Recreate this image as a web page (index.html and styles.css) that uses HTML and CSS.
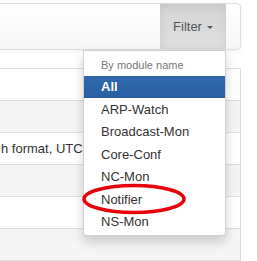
FILE: index.html
```html
<!DOCTYPE html>
<html lang="en">
<head>
  <meta charset="UTF-8" />
  <title>Events</title>
  <link rel="stylesheet" href="styles.css">
</head>
<body>

  <div class="page">
    <div class="navbar">
      <div class="filter">
        <a class="toggle" href="#">Filter <span class="caret"></span></a>
        <ul class="menu">
          <li class="header">By module name</li>
          <li class="active"><a href="#">All</a></li>
          <li><a href="#">ARP-Watch</a></li>
          <li><a href="#">Broadcast-Mon</a></li>
          <li><a href="#">Core-Conf</a></li>
          <li><a href="#">NC-Mon</a></li>
          <li><a href="#">Notifier</a></li>
          <li><a href="#">NS-Mon</a></li>
        </ul>
      </div>
    </div>

    <table class="events">
      <tbody>
        <tr><td>&nbsp;</td></tr>
        <tr><td>&nbsp;</td></tr>
        <tr><td class="cut"><span class="clip">h format, UTC time)</span></td></tr>
        <tr><td>&nbsp;</td></tr>
        <tr><td>&nbsp;</td></tr>
        <tr><td>&nbsp;</td></tr>
      </tbody>
    </table>
  </div>

  <svg class="mark" width="108" height="34" viewBox="0 0 108 34">
    <ellipse cx="53" cy="17" rx="50" ry="13.5" fill="none" stroke="#e8000b" stroke-width="3.5"/>
  </svg>

</body>
</html>
```

FILE: styles.css
```css
body {
  margin: 0;
  font-family: 'Liberation Sans', Arial, sans-serif;
  font-size: 12.5px;
  color: #333;
  background: white;
  position: relative;
  overflow: hidden;
}

.page {
  width: 261px;
  margin-left: -20px;
  padding-top: 3px;
}

.navbar {
  height: 45px;
  border: 1px solid #dedede;
  border-radius: 4px;
  background: linear-gradient(to bottom, #ffffff 0%, #f6f6f6 100%);
  box-shadow: inset 0 1px 0 rgba(255,255,255,0.15), 0 1px 4px rgba(0,0,0,0.06);
  display: flex;
  justify-content: flex-end;
}

.filter {
  position: relative;
  margin-right: 14px;
}

.toggle {
  display: flex;
  align-items: center;
  justify-content: center;
  gap: 5px;
  width: 66px;
  height: 45px;
  color: #555;
  text-decoration: none;
  font-size: 13px;
  background: linear-gradient(to bottom, #d6d6d6 0%, #dedede 100%);
  box-shadow: inset 0 3px 9px rgba(0,0,0,0.08);
}

.caret {
  display: inline-block;
  width: 0;
  height: 0;
  border-top: 3px solid #555;
  border-left: 3px solid transparent;
  border-right: 3px solid transparent;
  margin-top: 1px;
}

.menu {
  position: absolute;
  top: 46px;
  right: 0;
  width: 141px;
  margin: 0;
  padding: 4px 0 2px;
  list-style: none;
  background: white;
  border: 1px solid rgba(0,0,0,0.18);
  border-top-color: #d0d0d0;
  border-radius: 0 0 4px 4px;
  box-shadow: 0 6px 12px rgba(0,0,0,0.175);
  z-index: 2;
}

.menu li a {
  display: block;
  padding: 2.75px 17px;
  line-height: 17px;
  color: #333;
  text-decoration: none;
  font-size: 13px;
}

.menu .header {
  padding: 3px 17px 2.5px;
  line-height: 15px;
  font-size: 11px;
  color: #777;
}

.menu .active a {
  color: white;
  font-weight: bold;
  background: linear-gradient(to bottom, #2f68ad 0%, #2a5fa3 100%);
}

.events {
  width: 261px;
  margin-top: 18px;
  border-collapse: collapse;
  border: 1px solid #dddddd;
}

.events td {
  height: 31px;
  padding: 0;
  border-top: 1px solid #dddddd;
  white-space: nowrap;
  font-size: 13px;
}

.events tr:nth-child(even) td {
  background: #f5f5f5;
}

.events td.cut {
  padding-left: 20px;
}

.clip {
  display: block;
  width: 83px;
  overflow: hidden;
}

.mark {
  position: absolute;
  left: 81px;
  top: 182px;
  z-index: 3;
}
```
